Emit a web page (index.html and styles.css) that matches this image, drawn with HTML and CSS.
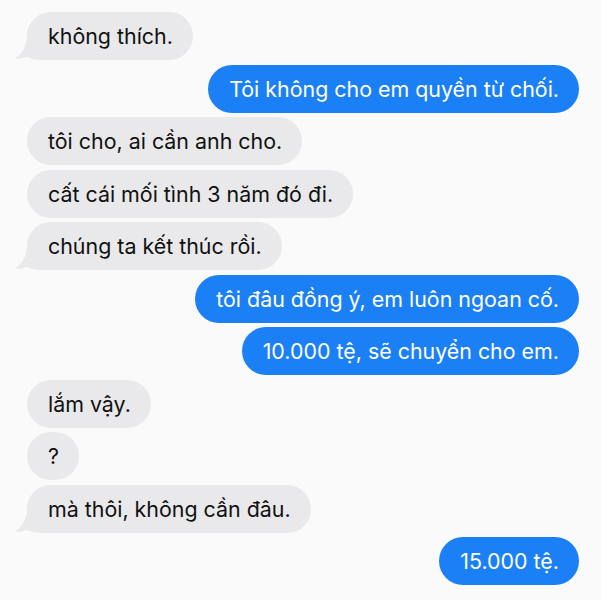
FILE: index.html
```html
<!DOCTYPE html>
<html lang="vi">
<head>
<meta charset="utf-8">
<title>Tin nhắn</title>
<link rel="stylesheet" href="styles.css">
</head>
<body>
<div class="thread">
  <div class="msg in tail"><svg class="tail-svg" viewBox="0 0 40 30" width="40" height="30"><path d="M13.5 0 L40 0 L40 30 L27 30 C21 30 16 28.8 12.5 26.5 C9 28.6 4.5 29.3 0.5 28.6 C7.5 25 13.5 17 13.5 0 Z"/></svg><span class="txt">không thích.</span></div>
  <div class="msg out"><span class="txt">Tôi không cho em quyền từ chối.</span></div>
  <div class="msg in"><span class="txt">tôi cho, ai cần anh cho.</span></div>
  <div class="msg in"><span class="txt">cất cái mối tình 3 năm đó đi.</span></div>
  <div class="msg in tail"><svg class="tail-svg" viewBox="0 0 40 30" width="40" height="30"><path d="M13.5 0 L40 0 L40 30 L27 30 C21 30 16 28.8 12.5 26.5 C9 28.6 4.5 29.3 0.5 28.6 C7.5 25 13.5 17 13.5 0 Z"/></svg><span class="txt">chúng ta kết thúc rồi.</span></div>
  <div class="msg out"><span class="txt">tôi đâu đồng ý, em luôn ngoan cố.</span></div>
  <div class="msg out"><span class="txt">10.000 tệ, sẽ chuyển cho em.</span></div>
  <div class="msg in"><span class="txt">lắm vậy.</span></div>
  <div class="msg in"><span class="txt">?</span></div>
  <div class="msg in tail"><svg class="tail-svg" viewBox="0 0 40 30" width="40" height="30"><path d="M13.5 0 L40 0 L40 30 L27 30 C21 30 16 28.8 12.5 26.5 C9 28.6 4.5 29.3 0.5 28.6 C7.5 25 13.5 17 13.5 0 Z"/></svg><span class="txt">mà thôi, không cần đâu.</span></div>
  <div class="msg out"><span class="txt">15.000 tệ.</span></div>
</div>
</body>
</html>
```

FILE: styles.css
```css
html, body {
  margin: 0;
  padding: 0;
  background: #fafafa;
}

body {
  font-family: Inter, "Noto Sans", "DejaVu Sans", sans-serif;
  -webkit-font-smoothing: antialiased;
}

.thread {
  display: flex;
  flex-direction: column;
  gap: 4.5px;
  padding: 12px 22px 0 27px;
}

.msg {
  position: relative;
  height: 48px;
  line-height: 48px;
  padding: 0 20px 0 21px;
  border-radius: 24px;
  font-size: 21.4px;
  white-space: nowrap;
  box-sizing: border-box;
}

.txt {
  position: relative;
}

.in {
  align-self: flex-start;
  background: #e9e9eb;
  color: #111111;
}

.out {
  align-self: flex-end;
  background: #1b80f6;
  color: #ffffff;
}

.tail-svg {
  position: absolute;
  left: -13.5px;
  bottom: 0;
  fill: #e9e9eb;
}
```
